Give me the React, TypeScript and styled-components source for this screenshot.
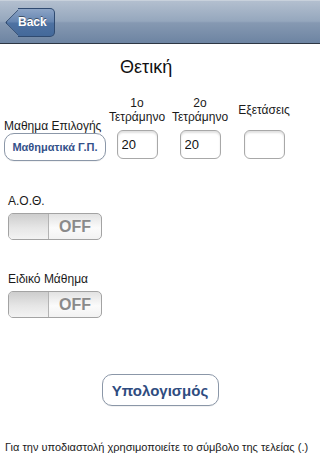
import styled, { createGlobalStyle } from "styled-components";

const GlobalStyle = createGlobalStyle`
  html, body {
    margin: 0;
    padding: 0;
    background: #ffffff;
  }
  body {
    font-family: "Liberation Sans", Arial, sans-serif;
    color: #1a1a1a;
  }
  * {
    box-sizing: border-box;
  }
`;

const blueGradient = (angle: string) =>
  `linear-gradient(${angle}, #8ca4c6 0%, #6585b1 48%, #4e72a2 52%, #44699a 100%)`;

const Switch = ({ on = false }: { on?: boolean }) => (
  <SwitchTrack>
    <SwitchThumb />
    <SwitchText>{on ? "ON" : "OFF"}</SwitchText>
  </SwitchTrack>
);

export default function App() {
  return (
    <Screen>
      <GlobalStyle />
      <NavBar>
        <BackButton>Back</BackButton>
      </NavBar>

      <Title>Θετική</Title>

      <FieldGrid>
        <SubjectCell>
          <FieldLabel>Μαθημα Επιλογής</FieldLabel>
          <SubjectButton>Μαθηματικά Γ.Π.</SubjectButton>
        </SubjectCell>
        <ColumnLabel>
          1ο
          <br />
          Τετράμηνο
        </ColumnLabel>
        <ColumnLabel>
          2ο
          <br />
          Τετράμηνο
        </ColumnLabel>
        <ColumnLabel>Εξετάσεις</ColumnLabel>
        <GradeInput defaultValue="20" />
        <GradeInput defaultValue="20" />
        <GradeInput defaultValue="" />
      </FieldGrid>

      <ToggleGroup>
        <FieldLabel>Α.Ο.Θ.</FieldLabel>
        <Switch />
      </ToggleGroup>

      <ToggleGroup $top={32}>
        <FieldLabel>Ειδικό Μάθημα</FieldLabel>
        <Switch />
      </ToggleGroup>

      <Actions>
        <CalcButton>Υπολογισμός</CalcButton>
      </Actions>

      <Footer>Για την υποδιαστολή χρησιμοποιείτε το σύμβολο της τελείας (.)</Footer>
    </Screen>
  );
}

const Screen = styled.div`
  width: 320px;
  height: 460px;
  overflow: hidden;
  background: #ffffff;
`;

const NavBar = styled.div`
  display: flex;
  align-items: center;
  height: 44px;
  background: linear-gradient(
    #b3bfcf 0%,
    #95a7bd 48%,
    #8699b2 52%,
    #6d84a2 100%
  );
  border-top: 1px solid #c8d1dc;
  border-bottom: 1px solid #2d3642;
`;

const BackButton = styled.button`
  position: relative;
  isolation: isolate;
  margin-left: 5px;
  height: 29px;
  padding: 0 8px 0 13px;
  border: none;
  background: transparent;
  color: #ffffff;
  font-family: "Liberation Sans", Arial, sans-serif;
  font-weight: bold;
  font-size: 12px;
  text-shadow: 0 -1px 0 rgba(0, 0, 0, 0.45);

  &::before {
    content: "";
    position: absolute;
    z-index: -1;
    left: 4px;
    top: 4.5px;
    width: 20px;
    height: 20px;
    transform: rotate(45deg);
    border-left: 1px solid #2f4a70;
    border-bottom: 1px solid #2f4a70;
    border-radius: 0 0 0 3px;
    background: ${blueGradient("135deg")};
  }

  &::after {
    content: "";
    position: absolute;
    z-index: -1;
    top: 0;
    bottom: 0;
    left: 13px;
    right: 0;
    border: 1px solid #2f4a70;
    border-left: none;
    border-radius: 0 5px 5px 0;
    background: ${blueGradient("180deg")};
  }
`;

const Title = styled.div`
  margin-top: 13px;
  padding-left: 120px;
  font-size: 18px;
  line-height: 20px;
  color: #111;
`;

const FieldGrid = styled.div`
  display: grid;
  grid-template-columns: 102px 62px 64px 64px;
  grid-template-rows: 30px 31px;
  row-gap: 5px;
  margin-top: 18px;
  padding-left: 4px;
`;

const SubjectCell = styled.div`
  grid-row: 1 / 3;
  display: flex;
  flex-direction: column;
  justify-content: flex-end;
  align-items: flex-start;
`;

const FieldLabel = styled.div`
  font-size: 12px;
  line-height: 14px;
  color: #1a1a1a;
  white-space: nowrap;
`;

const ColumnLabel = styled.div`
  align-self: center;
  text-align: center;
  font-size: 12px;
  line-height: 14px;
  color: #1a1a1a;
  white-space: nowrap;
`;

const RoundButton = styled.button`
  background: #ffffff;
  border: 1px solid #8b97a8;
  border-radius: 10px;
  color: #34518a;
  font-family: "Liberation Sans", Arial, sans-serif;
  font-weight: bold;
  box-shadow: 0 1px 0 rgba(0, 0, 0, 0.05);
`;

const SubjectButton = styled(RoundButton)`
  width: 102px;
  height: 28px;
  padding: 0;
  font-size: 11px;
`;

const GradeInput = styled.input`
  justify-self: center;
  align-self: start;
  width: 41px;
  height: 29px;
  padding: 0 0 0 4px;
  border: 1px solid #a8a8a8;
  border-radius: 6px;
  background: #ffffff;
  box-shadow: inset 0 2px 2px rgba(0, 0, 0, 0.12);
  font-family: "Liberation Sans", Arial, sans-serif;
  font-size: 13px;
  color: #111;
  outline: none;
`;

const ToggleGroup = styled.div<{ $top?: number }>`
  display: flex;
  flex-direction: column;
  align-items: flex-start;
  gap: 5px;
  margin-top: ${({ $top }) => $top ?? 33}px;
  padding-left: 8px;
`;

const SwitchTrack = styled.div`
  display: flex;
  width: 94px;
  height: 27px;
  border: 1px solid #a3a3a3;
  border-radius: 5px;
  overflow: hidden;
  background: linear-gradient(#e2e2e2 0%, #fbfbfb 55%, #f2f2f2 100%);
`;

const SwitchThumb = styled.div`
  width: 40px;
  border-right: 1px solid #b3b3b3;
  background: linear-gradient(#cdcdcd 0%, #e6e6e6 55%, #f3f3f3 100%);
`;

const SwitchText = styled.div`
  flex: 1;
  display: flex;
  align-items: center;
  justify-content: center;
  font-size: 16px;
  font-weight: bold;
  color: #8a8a8a;
`;

const Actions = styled.div`
  display: flex;
  justify-content: center;
  margin-top: 56px;
`;

const CalcButton = styled(RoundButton)`
  width: 117px;
  height: 32px;
  padding: 0;
  font-size: 15px;
  color: #2f4c80;
`;

const Footer = styled.div`
  margin-top: 35px;
  padding-left: 5px;
  font-size: 11px;
  line-height: 13px;
  color: #1a1a1a;
  white-space: nowrap;
`;
